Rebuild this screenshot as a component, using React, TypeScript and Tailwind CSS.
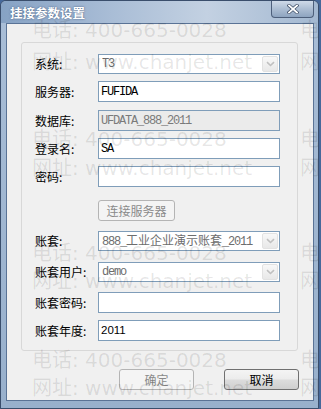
const cjk = "font-['Noto_Sans_CJK_SC',sans-serif]";
const mono = "font-['Liberation_Mono','Noto_Sans_CJK_SC',monospace] text-[12px] tracking-[-1.2px]";

function Label({ text }: { text: string }) {
  return (
    <span className={`w-[63px] shrink-0 text-[12px] leading-[14px] text-black ${cjk}`}>{text}</span>
  );
}

function TextBox({ children, disabled }: { children?: React.ReactNode; disabled?: boolean }) {
  return (
    <div
      className={`flex h-[21px] w-[182px] items-center border border-[#7f9db9] pl-[2px] ${
        disabled ? "bg-[#ebebeb] text-[#7a7a7a]" : "bg-white text-black"
      }`}
    >
      {children}
    </div>
  );
}

function Combo({ children }: { children?: React.ReactNode }) {
  return (
    <div className="flex h-[20px] w-[182px] items-center border border-[#7f9db9] bg-white p-px">
      <div className={`flex-1 overflow-hidden whitespace-nowrap pl-[2px] text-[#6d6d6d] ${mono}`}>{children}</div>
      <div className="flex h-full w-[16px] items-center justify-center rounded-[2px] border border-[#e2e2e2] bg-gradient-to-b from-[#f8f8f8] to-[#e8e8e8]">
        <svg width="9" height="6" viewBox="0 0 9 6">
          <path d="M1 1.2l3.5 3.3 3.5-3.3" stroke="#c0c0c0" strokeWidth="1.6" fill="none" />
        </svg>
      </div>
    </div>
  );
}

function Row({ label, mt, children }: { label: string; mt: string; children: React.ReactNode }) {
  return (
    <div className={`flex items-center ${mt}`}>
      <Label text={label} />
      {children}
    </div>
  );
}

const marks = [
  { top: 18, text: "电话: 400-665-0028" },
  { top: 50, text: "网址: www.chanjet.net" },
  { top: 127, text: "电话: 400-665-0028" },
  { top: 156, text: "网址: www.chanjet.net" },
  { top: 241, text: "电话: 400-665-0028" },
  { top: 269, text: "网址: www.chanjet.net" },
  { top: 348, text: "电话: 400-665-0028" },
  { top: 376, text: "网址: www.chanjet.net" },
];

export default function App() {
  return (
    <div className="h-[409px] w-[321px] overflow-hidden bg-[#46689a]">
      <div className="relative flex h-[409px] w-[319px] flex-col overflow-hidden rounded-t-[6px] border border-[#3a4e6c] bg-gradient-to-b from-[#a9bed7] to-[#98b0cc]">
        {/* title bar */}
        <div className="flex h-[22px] shrink-0 items-start bg-[linear-gradient(90deg,#86a2c4_0%,#a9bdd6_35%,#c3d1e2_65%,#a3b8d1_100%)] pl-[9px] pr-[4px]">
          <span className={`mt-[5px] text-[12.5px] font-bold leading-[14px] text-white [text-shadow:0_0_2px_#3d5578] ${cjk}`}>
            挂接参数设置
          </span>
          <div className="-mt-px ml-auto flex h-[18px] w-[43px] items-center justify-center rounded-b-[4px] border border-t-0 border-[#4d5f7b] bg-gradient-to-b from-[#d3deeb] via-[#aebfd4] to-[#8ea4c0]">
            <svg width="12" height="10" viewBox="0 0 12 10">
              <path d="M2 1.5l8 7M10 1.5l-8 7" stroke="#3f4f68" strokeWidth="3.2" strokeLinecap="square" />
              <path d="M2 1.5l8 7M10 1.5l-8 7" stroke="#ffffff" strokeWidth="1.8" strokeLinecap="square" />
            </svg>
          </div>
        </div>

        {/* client */}
        <div className="ml-[5px] mr-[4px] flex h-[378px] flex-col border border-[#5a7396] bg-[#f0f0f0]">
          <div className="ml-[14px] mt-[18px] flex h-[309px] w-[277px] flex-col rounded-[3px] border border-[#d8d8d8] pl-[13px] pt-[11px]">
            <Row label="系统:" mt="">
              <Combo>T3</Combo>
            </Row>
            <Row label="服务器:" mt="mt-[7px]">
              <TextBox>
                <span className={mono}>FUFIDA</span>
              </TextBox>
            </Row>
            <Row label="数据库:" mt="mt-[8px]">
              <TextBox disabled>
                <span className={mono}>UFDATA_888_2011</span>
              </TextBox>
            </Row>
            <Row label="登录名:" mt="mt-[7px]">
              <TextBox>
                <span className={mono}>SA</span>
              </TextBox>
            </Row>
            <Row label="密码:" mt="mt-[7px]">
              <TextBox />
            </Row>
            <div className="mt-[13px] flex">
              <div className="w-[63px]" />
              <div
                className={`flex h-[21px] w-[77px] items-center justify-center rounded-[3px] border border-[#b4b4b4] bg-[#f4f4f4] text-[12px] text-[#8a8a8a] ${cjk}`}
              >
                连接服务器
              </div>
            </div>
            <Row label="账套:" mt="mt-[10px]">
              <Combo>
                888_<span className={`tracking-normal ${cjk}`}>工业企业演示账套</span>_2011
              </Combo>
            </Row>
            <Row label="账套用户:" mt="mt-[11px]">
              <Combo>demo</Combo>
            </Row>
            <Row label="账套密码:" mt="mt-[10px]">
              <TextBox />
            </Row>
            <Row label="账套年度:" mt="mt-[7px]">
              <TextBox>
                <span className="font-['Liberation_Sans',sans-serif] text-[11.5px]">2011</span>
              </TextBox>
            </Row>
          </div>

          <div className="mt-[18px] flex justify-end gap-[30px] pr-[14px]">
            <div
              className={`flex h-[21px] w-[75px] items-center justify-center rounded-[3px] border border-[#b4b4b4] bg-[#f4f4f4] text-[12px] text-[#8a8a8a] ${cjk}`}
            >
              确定
            </div>
            <div
              className={`flex h-[21px] w-[75px] items-center justify-center rounded-[3px] border border-[#707070] bg-[linear-gradient(180deg,#f4f4f4_0%,#ececec_48%,#dcdcdc_52%,#cfcfcf_100%)] text-[12px] text-black ${cjk}`}
            >
              取消
            </div>
          </div>
        </div>

        {/* watermark */}
        <div className="pointer-events-none absolute inset-0">
          {marks.map((m, i) => (
            <div key={i}>
              <div
                className="absolute left-[31px] whitespace-nowrap font-['DejaVu_Sans','Noto_Sans_CJK_SC',sans-serif] text-[20px] leading-[22px] text-black/10"
                style={{ top: m.top }}
              >
                {m.text}
              </div>
              <div
                className="absolute left-[299px] whitespace-nowrap font-['DejaVu_Sans','Noto_Sans_CJK_SC',sans-serif] text-[20px] leading-[22px] text-black/10"
                style={{ top: m.top }}
              >
                {m.text}
              </div>
            </div>
          ))}
        </div>
      </div>
    </div>
  );
}
